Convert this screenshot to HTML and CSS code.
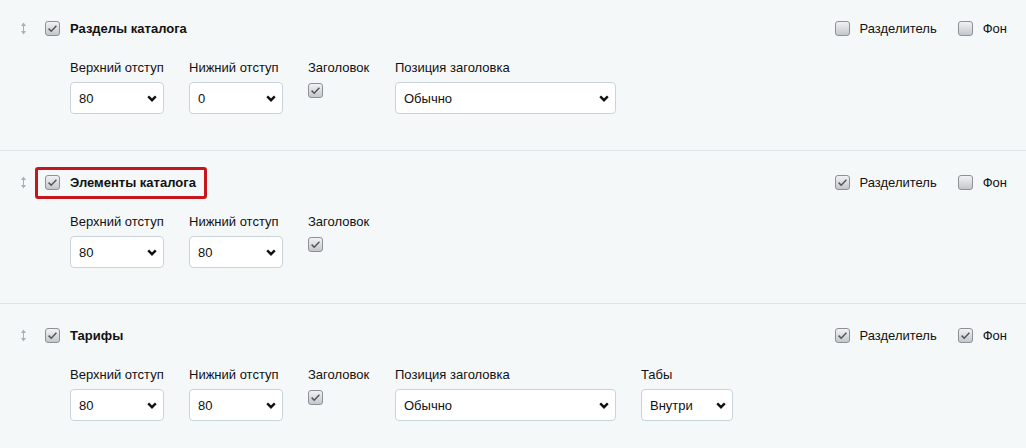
FILE: index.html
```html
<!DOCTYPE html>
<html lang="ru">
<head>
	<meta charset="UTF-8">
	<meta name="viewport" content="width=device-width, initial-scale=1.0">
	<title>Блоки</title>
	<link rel="stylesheet" href="styles.css">
</head>
<body>
<div class="blocks">
	<!-- Разделы каталога -->
	<div class="block first">
		<div class="block-head">
			<div class="head-left">
				<span class="drag"><svg width="7" height="13" viewBox="0 0 7 13"><path d="M3.5 3v7" stroke="#a9b0b5" stroke-width="1"/><path d="M1 4L3.5 0.5 6 4zM1 9l2.5 3.5L6 9z" fill="#a9b0b5"/></svg></span>
				<label class="title"><span class="check on"></span>Разделы каталога</label>
			</div>
			<div class="head-right">
				<label class="opt"><span class="check"></span>Разделитель</label>
				<label class="opt"><span class="check"></span>Фон</label>
			</div>
		</div>
		<div class="fields">
			<div class="field w94">
				<span class="field-label">Верхний отступ</span>
				<div class="select"><span>80</span><svg width="10" height="7" viewBox="0 0 10 7"><path d="M1.2 1.4L5 5.2l3.8-3.8" fill="none" stroke="#111" stroke-width="2.4"/></svg></div>
			</div>
			<div class="field w94">
				<span class="field-label">Нижний отступ</span>
				<div class="select"><span>0</span><svg width="10" height="7" viewBox="0 0 10 7"><path d="M1.2 1.4L5 5.2l3.8-3.8" fill="none" stroke="#111" stroke-width="2.4"/></svg></div>
			</div>
			<div class="field w62">
				<span class="field-label">Заголовок</span>
				<span class="check on field-check"></span>
			</div>
			<div class="field w221">
				<span class="field-label">Позиция заголовка</span>
				<div class="select"><span>Обычно</span><svg width="10" height="7" viewBox="0 0 10 7"><path d="M1.2 1.4L5 5.2l3.8-3.8" fill="none" stroke="#111" stroke-width="2.4"/></svg></div>
			</div>
		</div>
	</div>

	<!-- Элементы каталога -->
	<div class="block">
		<div class="block-head">
			<div class="head-left">
				<span class="drag"><svg width="7" height="13" viewBox="0 0 7 13"><path d="M3.5 3v7" stroke="#a9b0b5" stroke-width="1"/><path d="M1 4L3.5 0.5 6 4zM1 9l2.5 3.5L6 9z" fill="#a9b0b5"/></svg></span>
				<label class="title marked"><span class="check on"></span>Элементы каталога</label>
			</div>
			<div class="head-right">
				<label class="opt"><span class="check on"></span>Разделитель</label>
				<label class="opt"><span class="check"></span>Фон</label>
			</div>
		</div>
		<div class="fields">
			<div class="field w94">
				<span class="field-label">Верхний отступ</span>
				<div class="select"><span>80</span><svg width="10" height="7" viewBox="0 0 10 7"><path d="M1.2 1.4L5 5.2l3.8-3.8" fill="none" stroke="#111" stroke-width="2.4"/></svg></div>
			</div>
			<div class="field w94">
				<span class="field-label">Нижний отступ</span>
				<div class="select"><span>80</span><svg width="10" height="7" viewBox="0 0 10 7"><path d="M1.2 1.4L5 5.2l3.8-3.8" fill="none" stroke="#111" stroke-width="2.4"/></svg></div>
			</div>
			<div class="field w62">
				<span class="field-label">Заголовок</span>
				<span class="check on field-check"></span>
			</div>
		</div>
	</div>

	<!-- Тарифы -->
	<div class="block">
		<div class="block-head">
			<div class="head-left">
				<span class="drag"><svg width="7" height="13" viewBox="0 0 7 13"><path d="M3.5 3v7" stroke="#a9b0b5" stroke-width="1"/><path d="M1 4L3.5 0.5 6 4zM1 9l2.5 3.5L6 9z" fill="#a9b0b5"/></svg></span>
				<label class="title"><span class="check on"></span>Тарифы</label>
			</div>
			<div class="head-right">
				<label class="opt"><span class="check on"></span>Разделитель</label>
				<label class="opt"><span class="check on"></span>Фон</label>
			</div>
		</div>
		<div class="fields">
			<div class="field w94">
				<span class="field-label">Верхний отступ</span>
				<div class="select"><span>80</span><svg width="10" height="7" viewBox="0 0 10 7"><path d="M1.2 1.4L5 5.2l3.8-3.8" fill="none" stroke="#111" stroke-width="2.4"/></svg></div>
			</div>
			<div class="field w94">
				<span class="field-label">Нижний отступ</span>
				<div class="select"><span>80</span><svg width="10" height="7" viewBox="0 0 10 7"><path d="M1.2 1.4L5 5.2l3.8-3.8" fill="none" stroke="#111" stroke-width="2.4"/></svg></div>
			</div>
			<div class="field w62">
				<span class="field-label">Заголовок</span>
				<span class="check on field-check"></span>
			</div>
			<div class="field w221">
				<span class="field-label">Позиция заголовка</span>
				<div class="select"><span>Обычно</span><svg width="10" height="7" viewBox="0 0 10 7"><path d="M1.2 1.4L5 5.2l3.8-3.8" fill="none" stroke="#111" stroke-width="2.4"/></svg></div>
			</div>
			<div class="field w92">
				<span class="field-label">Табы</span>
				<div class="select"><span>Внутри</span><svg width="10" height="7" viewBox="0 0 10 7"><path d="M1.2 1.4L5 5.2l3.8-3.8" fill="none" stroke="#111" stroke-width="2.4"/></svg></div>
			</div>
		</div>
	</div>
</div>
</body>
</html>
```

FILE: styles.css
```css
html, body {
	margin: 0;
	background-color: #f5f8f9;
}
body {
	font-family: "Liberation Sans", Arial, sans-serif;
	font-size: 13px;
	color: #111;
	overflow: hidden;
}
.block {
	padding: 24px 19px 35px 20px;
	border-bottom: 1px solid #dce5ea;
}
.block.first {
	padding-top: 21px;
	padding-bottom: 36px;
}
.block-head {
	display: flex;
	justify-content: space-between;
	align-items: center;
	height: 15px;
}
.head-left, .head-right {
	display: flex;
	align-items: center;
}
.drag {
	display: flex;
	width: 7px;
	margin-right: 18px;
}
.title {
	position: relative;
	display: flex;
	align-items: center;
	gap: 10px;
	font-weight: bold;
}
.title.marked::after {
	content: "";
	position: absolute;
	left: -10px;
	top: -8px;
	right: -11px;
	bottom: -9px;
	border: 3px solid #c4161c;
	border-radius: 3px;
}
.head-right {
	gap: 21px;
}
.opt {
	display: flex;
	align-items: center;
	gap: 10px;
}
.check {
	display: inline-block;
	box-sizing: border-box;
	width: 15px;
	height: 15px;
	border: 1px solid #8c9196;
	border-radius: 3px;
	background: linear-gradient(#f1f2f4, #c3c7cb);
	flex: none;
}
.check.on {
	background-image: url("data:image/svg+xml,%3Csvg xmlns='http://www.w3.org/2000/svg' width='13' height='13' viewBox='0 0 13 13'%3E%3Cpath d='M2.6 6.6l2.6 2.6 5.2-5.4' fill='none' stroke='%23555' stroke-width='1.5'/%3E%3C/svg%3E"), linear-gradient(#f1f2f4, #c3c7cb);
	background-repeat: no-repeat;
}
.fields {
	display: flex;
	gap: 25px;
	margin-top: 24px;
	padding-left: 50px;
}
.field {
	display: flex;
	flex-direction: column;
}
.field-label {
	line-height: 15px;
	white-space: nowrap;
}
.w94 { width: 94px; }
.w62 { width: 62px; }
.w221 { width: 221px; }
.w92 { width: 92px; }
.select {
	box-sizing: border-box;
	display: flex;
	align-items: center;
	justify-content: space-between;
	height: 32px;
	margin-top: 7px;
	padding: 0 6px 0 8px;
	background-color: #fff;
	border: 1px solid #c8d4da;
	border-radius: 4px;
}
.field-check {
	margin-top: 8px;
}
```
